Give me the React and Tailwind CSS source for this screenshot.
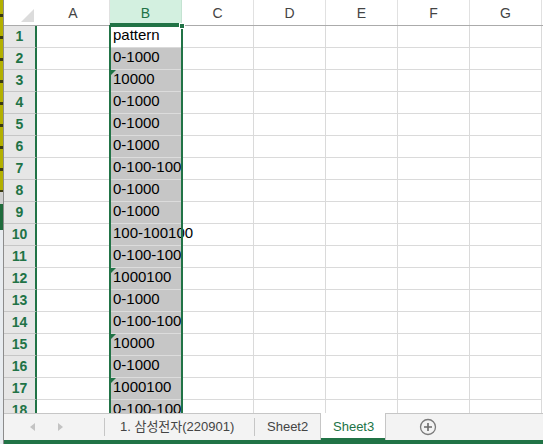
const data = [
  'pattern', '0-1000', '10000', '0-1000', '0-1000', '0-1000', '0-100-100', '0-1000', '0-1000',
  '100-100100', '0-100-100', '1000100', '0-1000', '0-100-100', '10000', '0-1000', '1000100', '0-100-100',
];
const flagged = [3, 12, 15, 17];
const cols = ['A', 'B', 'C', 'D', 'E', 'F', 'G'];
const font = { fontFamily: '"Liberation Sans", Arial, sans-serif' };

const ColHeader = ({ label }) => {
  const active = label === 'B';
  const w = label === 'A' ? 'w-[73px]' : 'w-[72px]';
  return (
    <div
      className={`${w} shrink-0 h-full flex items-center justify-center border-r ${
        active
          ? 'bg-[#d3f0e0] text-[#217346] border-[#c4e3d2] shadow-[inset_0_-2px_0_#217346]'
          : 'text-[#444] border-[#e1e1e1]'
      } text-[14px] pt-[2px]`}
    >
      {label}
    </div>
  );
};

const Row = ({ n, value }) => (
  <div className="flex h-[22px] shrink-0">
    <div className="w-[33px] shrink-0 bg-[#e6e6e6] border-r-2 border-r-[#217346] border-b border-b-[#c6c6c6] flex items-center justify-center text-[14px] font-bold text-[#217346]">
      {n}
    </div>
    {cols.map((c) => {
      const w = c === 'A' ? 'w-[73px]' : 'w-[72px]';
      if (c !== 'B')
        return <div key={c} className={`${w} shrink-0 border-r border-b border-[#dadada]`} />;
      const sel = n !== 1;
      return (
        <div
          key={c}
          className={`${w} shrink-0 relative border-r border-b ${
            sel ? 'bg-[#c6c6c6] border-[#dcdcdc]' : 'border-[#dadada]'
          } flex items-end pl-[3px] pb-[1px] text-[15px] text-black whitespace-nowrap overflow-visible`}
        >
          {flagged.includes(n) && (
            <span className="absolute left-[1px] top-0 w-0 h-0 border-t-[5px] border-t-[#217346] border-r-[5px] border-r-transparent" />
          )}
          <span className="relative">{value}</span>
        </div>
      );
    })}
  </div>
);

export default function App() {
  return (
    <div className="w-[543px] h-[444px] flex overflow-hidden bg-white" style={font}>
      <div className="w-[3px] shrink-0 flex flex-col">
        <div className="h-[192px] bg-[#b3b000] bg-[repeating-linear-gradient(180deg,#b3b000_0px,#b3b000_14px,#3a3a10_14px,#3a3a10_17px,#b3b000_17px,#b3b000_22px)]" />
        <div className="h-[12px] bg-[#cfcfcf]" />
        <div className="h-[26px] bg-[#1f6b3c]" />
        <div className="flex-1 bg-[#e8ecf0]" />
      </div>
      <div className="flex-1 flex flex-col border-l border-[#8c8c8c] min-w-0">
        <div className="relative flex-1 overflow-hidden bg-white">
          <div className="flex h-[26px] border-b border-[#ababab]">
            <div className="w-[33px] shrink-0 relative h-full">
              <span className="absolute right-[3px] bottom-[3px] w-0 h-0 border-b-[13px] border-b-[#dcdcdc] border-l-[13px] border-l-transparent" />
            </div>
            {cols.map((c) => (
              <ColHeader key={c} label={c} />
            ))}
          </div>
          {data.map((v, i) => (
            <Row key={i} n={i + 1} value={v} />
          ))}
          <div className="absolute left-[105px] top-[25px] w-[74px] h-[400px] border-2 border-[#217346] pointer-events-none" />
          <div className="absolute left-[175px] top-[23px] w-[6px] h-[6px] bg-[#217346] border border-white" />
        </div>
        <div className="h-[27px] shrink-0 flex bg-[#f3f3f3] border-t border-[#c6c6c6] text-[13px] text-[#444]">
          <div className="w-[100px] shrink-0 flex items-center">
            <span className="ml-[26px] w-0 h-0 border-y-[4px] border-y-transparent border-r-[5px] border-r-[#c3c3c3]" />
            <span className="ml-[23px] w-0 h-0 border-y-[4px] border-y-transparent border-l-[5px] border-l-[#c3c3c3]" />
          </div>
          <div className="w-px my-[4px] bg-[#c6c6c6]" />
          <div
            className="w-[149px] shrink-0 flex items-center pl-[15px] whitespace-nowrap"
            style={{ fontFamily: '"Liberation Sans", "Noto Sans CJK KR", sans-serif' }}
          >
            1. 삼성전자(220901)
          </div>
          <div className="w-px my-[4px] bg-[#c6c6c6]" />
          <div className="w-[65px] shrink-0 flex items-center pl-[12px]">Sheet2</div>
          <div className="w-[66px] shrink-0 -mt-px bg-white border-x border-[#c6c6c6] flex items-center pl-[12px] text-[#217346] shadow-[inset_0_-2px_0_#217346]">
            Sheet3
          </div>
          <div className="ml-[33px] flex items-center">
            <svg width="18" height="18" viewBox="0 0 18 18">
              <circle cx="9" cy="9" r="7.5" fill="none" stroke="#7a7a7a" strokeWidth="1.3" />
              <path d="M9 5v8M5 9h8" stroke="#6a6a6a" strokeWidth="1.6" />
            </svg>
          </div>
        </div>
        <div className="h-[4px] shrink-0 bg-[#217346]" />
      </div>
    </div>
  );
}
